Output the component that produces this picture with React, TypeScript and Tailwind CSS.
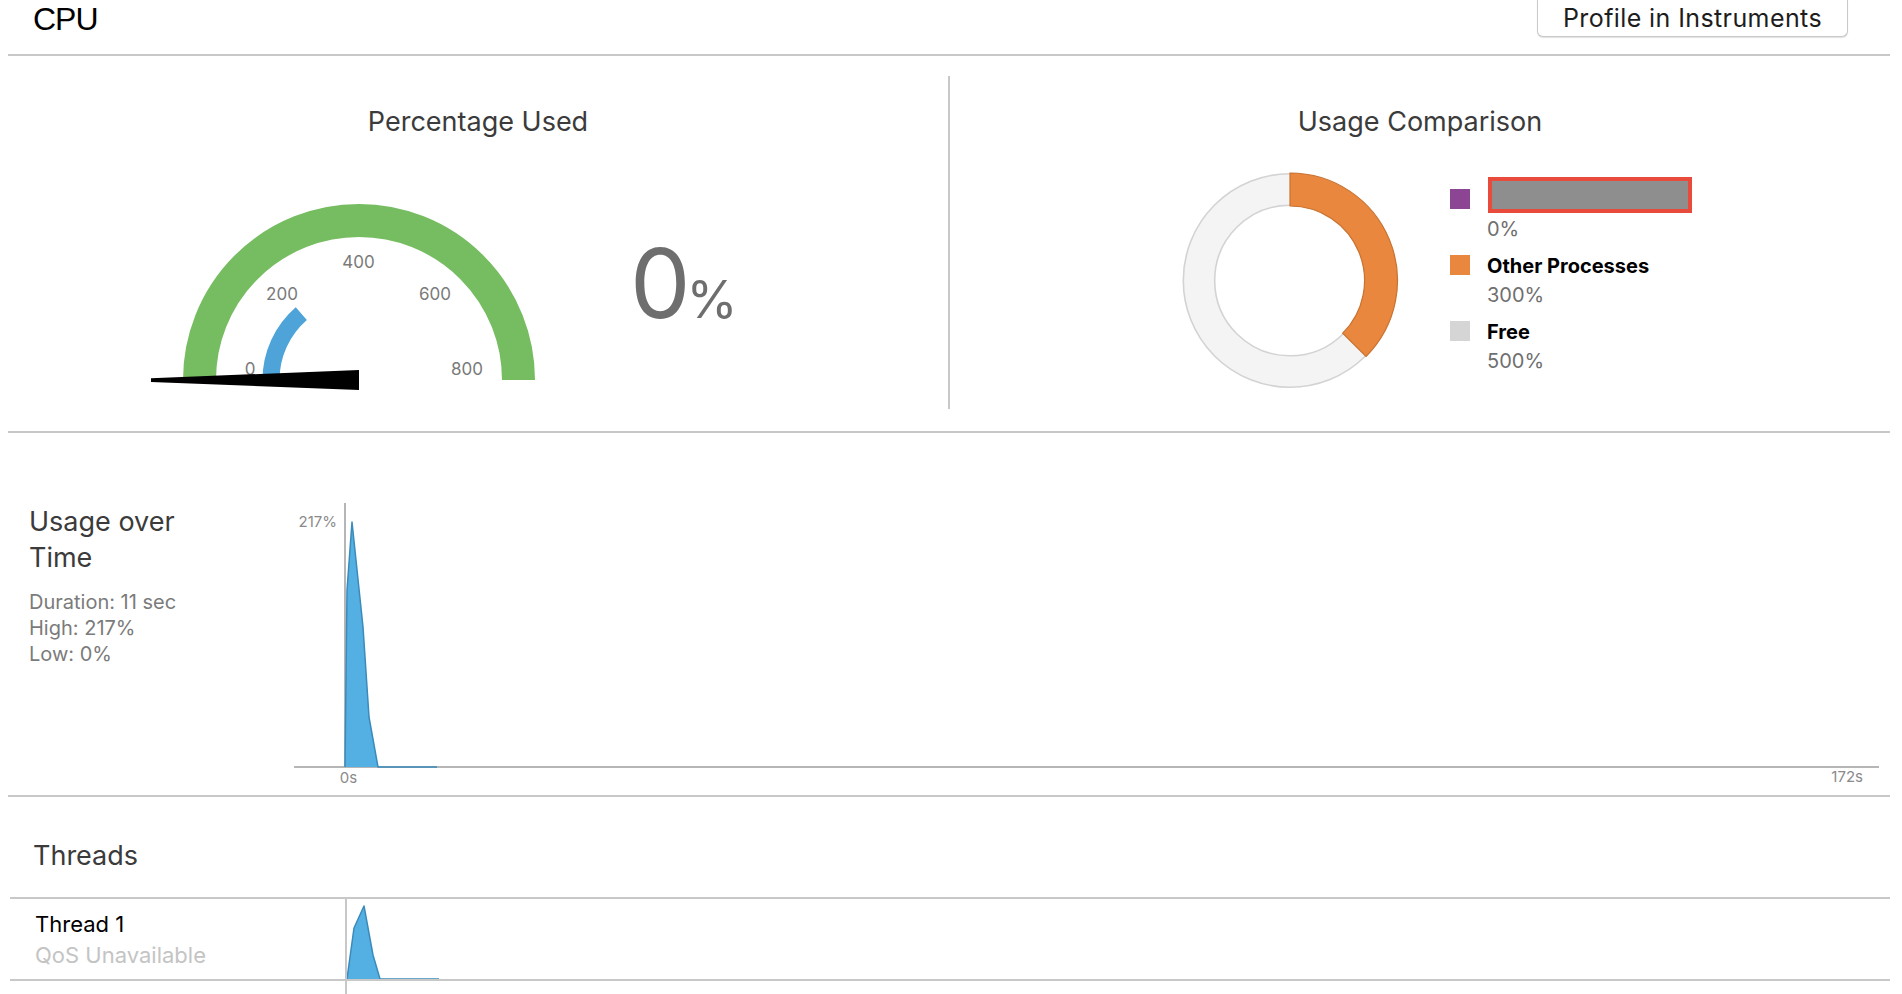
import React from "react";

function Gauge() {
  // centre of the dial sits at (219, 180) inside this box
  return (
    <svg width={420} height={200} viewBox="0 0 420 200" className="ml-[132px] shrink-0">
      <path d="M59.5 180 A159.5 159.5 0 0 1 378.5 180" fill="none" stroke="#76bc60" strokeWidth={33} />
      <path d="M131 180 A88 88 0 0 1 161.3 113.6" fill="none" stroke="#4ea3d8" strokeWidth={17} />
      <g fontFamily="Inter, sans-serif" fontSize={17} fill="#7a7a7a" textAnchor="middle">
        <text x={110} y={175}>0</text>
        <text x={142} y={100}>200</text>
        <text x={218.5} y={68}>400</text>
        <text x={295} y={100}>600</text>
        <text x={327} y={175}>800</text>
      </g>
      <polygon points="11,178.3 219,170 219,190 11,182" fill="#000" />
    </svg>
  );
}

function Donut() {
  return (
    <svg width={220} height={220} viewBox="0 0 220 220" className="ml-[230px] shrink-0">
      <circle cx={110} cy={110.5} r={91} fill="none" stroke="#f4f4f4" strokeWidth={32} />
      <circle cx={110} cy={110.5} r={106.7} fill="none" stroke="#d3d3d3" strokeWidth={1.6} />
      <circle cx={110} cy={110.5} r={75.3} fill="none" stroke="#d3d3d3" strokeWidth={1.6} />
      <path
        d="M110 3 A107.5 107.5 0 0 1 186 186.5 L162.7 163.2 A74.5 74.5 0 0 0 110 36 Z"
        fill="#e8873d"
        stroke="#c97332"
        strokeWidth={1.2}
      />
    </svg>
  );
}

function LegendItem({
  swatch,
  label,
  value,
  hidden,
}: {
  swatch: string;
  label: string;
  value: string;
  hidden?: boolean;
}) {
  return (
    <div className="flex h-[58px]">
      <div className={`w-[20px] h-[20px] mt-[3px] ${swatch}`} />
      <div className="ml-[17px] text-[20px] leading-[29px]">
        <div className="relative h-[29px] font-bold text-black">
          {label}
          {hidden && (
            <div className="absolute left-[1px] top-[-9px] w-[204px] h-[36px] border-4 border-[#e84b3c] bg-[#8e8e8e]" />
          )}
        </div>
        <div className="text-[#6f6f6f]">{value}</div>
      </div>
    </div>
  );
}

function UsageChart() {
  return (
    <svg width={1600} height={300} viewBox="0 0 1600 300" className="mt-[62px] shrink-0">
      <line x1={55} y1={8} x2={55} y2={272} stroke="#b6b6b6" strokeWidth={2} />
      <line x1={4} y1={272} x2={1589} y2={272} stroke="#b6b6b6" strokeWidth={2} />
      <polygon points="55,272 57,95 62,27 73,132 79,222 88,272" fill="#54b0e2" />
      <polyline
        points="55,272 57,95 62,27 73,132 79,222 88,272 147,272"
        fill="none"
        stroke="#3a8bbb"
        strokeWidth={1.5}
        strokeLinejoin="round"
      />
      <g fontFamily="Inter, sans-serif" fontSize={15} fill="#8a8a8a">
        <text x={47} y={32} textAnchor="end">217%</text>
        <text x={58.5} y={288} textAnchor="middle">0s</text>
        <text x={1573} y={287} textAnchor="end">172s</text>
      </g>
    </svg>
  );
}

function ThreadSpark() {
  return (
    <svg width={200} height={80} viewBox="0 0 200 80">
      <polygon points="0,80 7,29 17,7 26,56 33,80" fill="#54b0e2" />
      <polyline
        points="0,80 7,29 17,7 26,56 33,80 92,80"
        fill="none"
        stroke="#3a8bbb"
        strokeWidth={1.5}
        strokeLinejoin="round"
      />
    </svg>
  );
}

export default function App() {
  return (
    <div className="w-[1902px] h-[994px] overflow-hidden bg-white font-[family-name:Inter,sans-serif] text-[#3b3b3b]">
      {/* title bar */}
      <div className="h-[54px] flex justify-between items-start">
        <div className="pl-[33px] pt-[1px] text-[32px] leading-[36px] tracking-[-1px] text-black font-[family-name:'Liberation_Sans',Arial,sans-serif]">
          CPU
        </div>
        <button className="mr-[54px] w-[311px] h-[37px] pt-[1px] flex items-center justify-center rounded-b-[6px] border border-t-0 border-[#c9c9c9] bg-white text-[25px] leading-none tracking-[0.4px] text-[#1d1d1d] shadow-[0_1px_1px_rgba(0,0,0,0.12)]">
          Profile in Instruments
        </button>
      </div>
      <div className="ml-[8px] mr-[12px] h-[2px] bg-[#c8c8c8]" />

      {/* gauges */}
      <div className="ml-[8px] mr-[12px] h-[375px] flex">
        <div className="w-[940px] flex flex-col">
          <div className="pt-[49px] text-center text-[27px] leading-[34px]">Percentage Used</div>
          <div className="mt-[61px] flex items-start">
            <Gauge />
            <div className="ml-[70px] mt-[35px] text-[96px] leading-none text-[#6e6e6e]">
              <span className="tracking-[-4px]">0</span>
              <span className="text-[52px]">%</span>
            </div>
          </div>
        </div>
        <div className="w-[2px] h-[333px] mt-[20px] bg-[#c8c8c8]" />
        <div className="flex-1 flex flex-col">
          <div className="pt-[49px] text-center text-[27px] leading-[34px]">Usage Comparison</div>
          <div className="mt-[31px] flex items-start">
            <Donut />
            <div className="ml-[50px] mt-[16px] flex flex-col gap-[8px]">
              <LegendItem swatch="bg-[#8c4593]" label="" value="0%" hidden />
              <LegendItem swatch="bg-[#e8873d]" label="Other Processes" value="300%" />
              <LegendItem swatch="bg-[#d5d5d5]" label="Free" value="500%" />
            </div>
          </div>
        </div>
      </div>
      <div className="ml-[8px] mr-[12px] h-[2px] bg-[#c8c8c8]" />

      {/* usage over time */}
      <div className="ml-[8px] mr-[12px] h-[362px] flex">
        <div className="w-[282px] shrink-0 pl-[21px] pt-[71px]">
          <div className="w-[180px] text-[27px] leading-[36px] text-[#3b3b3b]">Usage over Time</div>
          <div className="mt-[13px] text-[20px] leading-[26px] text-[#7b7b7b]">
            <div>Duration: 11 sec</div>
            <div>High: 217%</div>
            <div>Low: 0%</div>
          </div>
        </div>
        <UsageChart />
      </div>
      <div className="ml-[8px] mr-[12px] h-[2px] bg-[#c8c8c8]" />

      {/* threads */}
      <div className="ml-[8px] mr-[12px]">
        <div className="pl-[25px] pt-[41px] text-[27px] leading-[36px]">Threads</div>
        <div className="mt-[23px] ml-[2px] h-[84px] flex border-y-2 border-[#c8c8c8]">
          <div className="w-[335px] shrink-0 pl-[25px] pt-[10px] text-[22px] leading-[31px]">
            <div className="text-black">Thread 1</div>
            <div className="text-[#c4c4c4]">QoS Unavailable</div>
          </div>
          <div className="flex-1 border-l-2 border-[#c8c8c8]">
            <ThreadSpark />
          </div>
        </div>
        <div className="ml-[337px] h-[20px] border-l-2 border-[#c8c8c8]" />
      </div>
    </div>
  );
}
